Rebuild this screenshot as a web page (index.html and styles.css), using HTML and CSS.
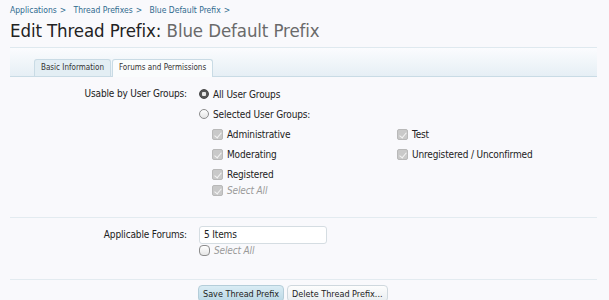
FILE: index.html
```html
<!DOCTYPE html>
<html lang="en">
<head>
  <meta charset="UTF-8" />
  <title>Edit Thread Prefix: Blue Default Prefix</title>
  <link rel="stylesheet" href="styles.css">
</head>
<body>
  <div class="page">
    <div class="breadcrumb">
      <a href="#">Applications</a><span class="sep">&gt;</span>
      <a href="#">Thread Prefixes</a><span class="sep">&gt;</span>
      <a href="#">Blue Default Prefix</a><span class="sep">&gt;</span>
    </div>
    <h1>Edit Thread Prefix: <span class="sub">Blue Default Prefix</span></h1>

    <div class="tabs">
      <span class="tab">Basic Information</span>
      <span class="tab active">Forums and Permissions</span>
    </div>

    <div class="form">
      <div class="row first">
        <div class="label">Usable by User Groups:</div>
        <div class="controls">
          <div class="opt"><span class="radio on"></span>All User Groups</div>
          <div class="opt"><span class="radio"></span>Selected User Groups:</div>
          <div class="groups">
            <div class="col">
              <div class="check"><span class="box"></span>Administrative</div>
              <div class="check"><span class="box"></span>Moderating</div>
              <div class="check"><span class="box"></span>Registered</div>
              <div class="check all"><span class="box"></span>Select All</div>
            </div>
            <div class="col">
              <div class="check"><span class="box"></span>Test</div>
              <div class="check"><span class="box"></span>Unregistered / Unconfirmed</div>
            </div>
          </div>
        </div>
      </div>

      <div class="row second">
        <div class="label field">Applicable Forums:</div>
        <div class="controls">
          <div class="textbox">5 Items</div>
          <div class="check all"><span class="box empty"></span>Select All</div>
        </div>
      </div>

      <div class="buttons">
        <button class="btn primary">Save Thread Prefix</button>
        <button class="btn">Delete Thread Prefix...</button>
      </div>
    </div>
  </div>
</body>
</html>
```

FILE: styles.css
```css
body { margin: 0; background: #f9f9fc; color: #222; font-family: "DejaVu Sans Condensed", "DejaVu Sans", sans-serif; font-size: 10px; }
.page { padding: 0 12px 0 10px; }
.breadcrumb { padding-top: 5px; font-size: 8.5px; color: #2f6a8e; height: 11px; line-height: 11px; }
.breadcrumb a { color: #2f6a8e; text-decoration: none; }
.breadcrumb .sep { margin: 0 5px 0 3px; }
h1 { margin: 3px 0 0; padding-bottom: 5px; font-size: 18.5px; font-weight: normal; color: #222; border-bottom: 1px solid #dfe9ef; line-height: 23px; letter-spacing: -0.1px; }
h1 .sub { color: #6a6a6a; }
.tabs { height: 28px; padding-left: 24px; display: flex; align-items: flex-end; gap: 1px; background: linear-gradient(#fbfcfe, #e6eff5); border-bottom: 1px solid #c9dbe5; }
.tab { height: 16px; line-height: 16px; padding: 0 6px; font-size: 8px; color: #333; background: #e3eef4; border: 1px solid #c9dbe5; border-bottom: none; border-radius: 3px 3px 0 0; }
.tab.active { background: #fafcfd; height: 17px; margin-bottom: -1px; }
.form { font-size: 10px; letter-spacing: -0.15px; }
.row { display: grid; grid-template-columns: 177px 1fr; column-gap: 12px; border-bottom: 1px solid #e3ebf0; }
.row.first { padding: 10px 0 20px; }
.row.second { padding: 8px 0 22px; }
.label { text-align: right; line-height: 14px; color: #222; }
.label.field { padding-top: 2px; }
.controls { display: flex; flex-direction: column; }
.opt { display: flex; align-items: center; height: 14px; margin-bottom: 6px; }
.radio { width: 10px; height: 10px; border-radius: 50%; border: 1px solid #8d8d8d; background: linear-gradient(#fff, #e4e4e4); margin-right: 4px; box-sizing: border-box; }
.radio.on { background: radial-gradient(circle, #e8e8e8 0 2px, #555 2.5px); border-color: #444; }
.groups { display: grid; grid-template-columns: 185px 1fr; padding-left: 13px; }
.col { display: flex; flex-direction: column; }
.check { display: flex; align-items: center; height: 14px; margin-bottom: 6px; }
.check.all { margin-top: -4px; margin-bottom: 0; color: #999; font-style: italic; }
.box { width: 11px; height: 11px; border-radius: 2px; margin-right: 4px; box-sizing: border-box; border: 1px solid #b9b9b9; background: #c9c9c9; position: relative; }
.box::after { content: ""; position: absolute; left: 3px; top: 1px; width: 3px; height: 6px; border: solid #f4f4f4; border-width: 0 1.5px 1.5px 0; transform: rotate(40deg); }
.box.empty { background: linear-gradient(#fff, #e6e6e6); border-color: #8d8d8d; border-radius: 4px; }
.box.empty::after { display: none; }
.row.second .check.all { margin-top: -1px; }
.textbox { width: 128px; height: 18px; box-sizing: border-box; border: 1px solid #d5dde2; border-radius: 3px; background: #fff; padding: 0 4px; line-height: 16px; }
.buttons { padding: 5px 0 0 188px; display: flex; gap: 3px; }
.btn { font-family: inherit; font-size: 9px; color: #222; height: 17px; padding: 0 4px; border: 1px solid #cfd8de; border-radius: 4px; background: linear-gradient(#fdfdfd, #e9eef1); }
.btn.primary { background: linear-gradient(#d9ecf4, #bcd9e6); border-color: #b4cdd9; }
```
